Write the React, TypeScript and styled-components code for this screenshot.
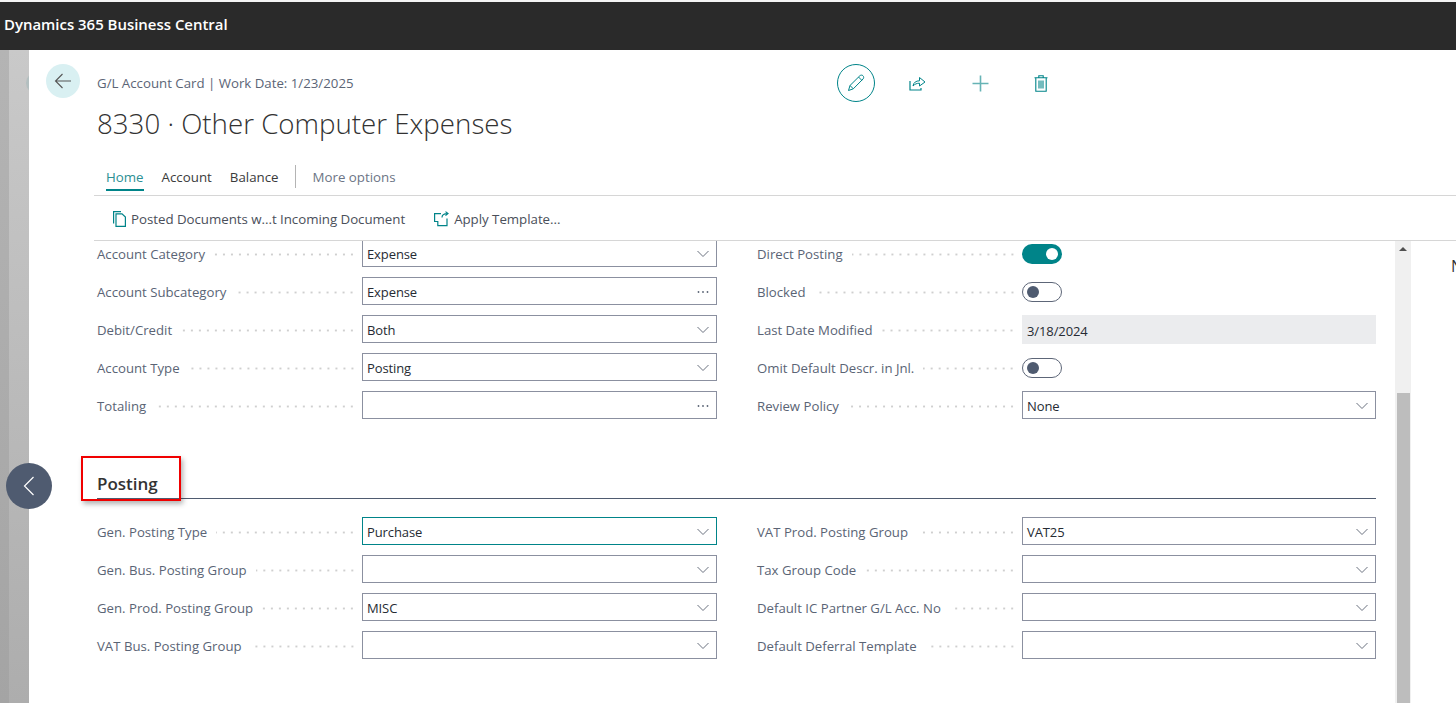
import React from "react";
import styled, { createGlobalStyle } from "styled-components";

const Global = createGlobalStyle`
  html, body { margin: 0; padding: 0; width: 100%; height: 100%; overflow: hidden; background: #fff; }
  #root { height: 100%; }
  * { box-sizing: border-box; }
  body { font-family: "Open Sans", "Noto Sans", "Liberation Sans", sans-serif; font-size: 13px; }
`;

const teal = "#008489";

const Page = styled.div`
  width: 1456px; height: 703px; display: flex; flex-direction: column; overflow: hidden; position: relative;
  border-top: 2px solid #f4f4f4;
`;
const TopBar = styled.header`
  height: 48px; flex: none; background: #2a2a2a; color: #fff; display: flex; align-items: center; padding: 0 0 4px 4px;
  font-size: 14.95px; font-weight: 600;
`;
const Body = styled.div`
  flex: 1; display: flex; min-height: 0; position: relative;
`;
const Rail = styled.div`
  width: 29px; flex: none; position: relative; overflow: hidden;
  background:
    linear-gradient(180deg, #b4b4b4 0, #a4a4a4 100%) left top / 9px 100% no-repeat,
    linear-gradient(180deg, #c9c9c9 0, #adadad 100%);
  &::after {
    content: ""; position: absolute; left: 26px; top: 22px; width: 22px; height: 22px; border-radius: 50%; background: #b3bfc0;
  }
`;
const Main = styled.main`
  flex: 1; min-width: 0; background: #fff; display: flex; flex-direction: column;
`;
const PageHead = styled.div`
  height: 111px; flex: none; display: flex; padding: 14px 0 0 17px;
`;
const BackButton = styled.div`
  width: 34px; height: 34px; border-radius: 50%; background: #d9f0f2; display: flex; align-items: center; justify-content: center; flex: none;
`;
const Titles = styled.div`
  width: 740px; margin-left: 17px; flex: none;
`;
const Crumb = styled.div`
  font-size: 13.25px; color: #5b6576; line-height: 18px; margin-top: 10px;
`;
const Title = styled.h1`
  margin: 12px 0 0; font-size: 27.7px; font-weight: 300; color: #323232; line-height: 38px; white-space: nowrap;
`;
const Actions = styled.div`
  display: flex; align-items: center; height: 38px;
`;
const EditButton = styled.div`
  width: 38px; height: 38px; border-radius: 50%; border: 1px solid ${teal}; display: flex; align-items: center; justify-content: center;
`;
const ActionIcon = styled.div<{ $gap: number }>`
  width: 24px; height: 24px; display: flex; align-items: center; justify-content: center; margin-left: ${p => p.$gap}px;
`;
const Tabs = styled.nav`
  margin-left: 65px; height: 35px; flex: none; display: flex; align-items: flex-start; border-bottom: 1px solid #d6d6d6; padding-left: 12px;
`;
const Tab = styled.div<{ $active?: boolean }>`
  height: 26px; line-height: 24px; font-size: 13.3px; color: ${p => (p.$active ? "#2c8f93" : "#3b3b3b")};
  border-bottom: 2px solid ${p => (p.$active ? teal : "transparent")}; margin-right: 18px; margin-top: 4px;
`;
const TabDivider = styled.div`
  width: 1px; height: 23px; background: #b4b4b4; margin: 4px 17px 0 -2px;
`;
const MoreTab = styled(Tab)`
  color: #6c7585;
`;
const CommandBar = styled.div`
  margin-left: 65px; height: 45px; flex: none; display: flex; align-items: center; border-bottom: 1px solid #d6d6d6; padding: 1px 0 0 19px; color: #4a4f5a; font-size: 13.3px; letter-spacing: -0.03px;
`;
const Command = styled.div`
  display: flex; align-items: center; gap: 5px; margin-right: 29px; white-space: nowrap;
`;
const Content = styled.div`
  flex: 1; min-height: 0; display: flex; overflow: hidden;
`;
const Form = styled.div`
  width: 1366px; flex: none; padding: 0 0 0 68px; margin-top: -2px;
`;
const FieldGrid = styled.div`
  display: grid; grid-template-columns: 620px 619px; column-gap: 40px; width: 1279px;
`;
const Column = styled.div`
  display: flex; flex-direction: column; gap: 10px;
`;
const Row = styled.div`
  display: flex; align-items: center; height: 28px;
`;
const Label = styled.div`
  width: 265px; flex: none; display: flex; align-items: center; color: #5a6475; font-size: 13.2px; white-space: nowrap; padding: 2px 6px 0 0;
`;
const Leader = styled.span`
  flex: 1; height: 3px; margin-left: 9px; margin-top: 1px;
  background-image: radial-gradient(circle, #cfcfcf 1px, transparent 1.2px);
  background-size: 8px 3px; background-position: right center; background-repeat: repeat-x;
`;
const InputBox = styled.div<{ $focus?: boolean }>`
  flex: 1; height: 28px; border: 1px solid ${p => (p.$focus ? teal : "#8b90a0")}; display: flex; align-items: center; justify-content: space-between;
  padding: 2px 6px 0 4px; font-size: 13px; color: #262b33; letter-spacing: -0.1px; background: #fff;
`;
const ReadOnly = styled(InputBox)`
  background: #ebecee; border-color: #ebecee; height: 29px; margin-top: 1px;
`;
const ToggleWrap = styled.div<{ $on?: boolean }>`
  width: 40px; height: 20px; border-radius: 10px; flex: none; position: relative; margin-top: 2px;
  background: ${p => (p.$on ? teal : "#fff")}; border: ${p => (p.$on ? "none" : "1px solid #5d6678")};
  &::after {
    content: ""; position: absolute; width: 12px; height: 12px; border-radius: 50%; top: 50%; transform: translateY(-50%);
    ${p => (p.$on ? "right: 4px; background: #fff;" : "left: 4px; background: #4f5b70;")}
  }
`;
const SectionHead = styled.h2`
  margin: 38px 0 18px; width: 1279px; height: 42px; font-size: 17px; font-weight: 600; color: #333;
  line-height: 24px; padding-top: 15px; border-bottom: 1px solid #4f5b70;
`;
const Scroll = styled.div`
  width: 16px; flex: none; background: #f0f0f0; display: flex; flex-direction: column; align-items: center;
`;
const ScrollArrow = styled.div`
  width: 0; height: 0; border-left: 4px solid transparent; border-right: 4px solid transparent; border-bottom: 4px solid #505050; margin-top: 6px;
`;
const ScrollThumb = styled.div`
  width: 13px; flex: 1; background: #bdbdbd; margin-top: 142px;
`;
const Aside = styled.div`
  flex: 1; overflow: hidden; padding: 15px 0 0 40px; font-size: 16px; color: #333; white-space: nowrap; line-height: 20px;
`;
const NavCircle = styled.div`
  position: absolute; left: 6px; top: 413px; width: 46px; height: 46px; border-radius: 50%; background: #4f5b70; display: flex; align-items: center; justify-content: center;
`;
const RedMark = styled.div`
  position: absolute; left: 81px; top: 406px; width: 100px; height: 45px; border: 2px solid #f00000; box-shadow: 2px 3px 5px rgba(0,0,0,.3);
`;

const Chevron = () => (
  <svg width="14" height="8" viewBox="0 0 14 8" fill="none"><path d="M1.5 1 L7 6.5 L12.5 1" stroke="#6b7280" strokeWidth="1" /></svg>
);
const Dots = () => (
  <svg width="14" height="4" viewBox="0 0 14 4"><circle cx="2.5" cy="2" r=".9" fill="#5a6475" /><circle cx="7" cy="2" r=".9" fill="#5a6475" /><circle cx="11.5" cy="2" r=".9" fill="#5a6475" /></svg>
);

type F = { label: string; value?: string; kind?: "select" | "lookup" | "ro" | "on" | "off"; focus?: boolean };

const Field = ({ label, value, kind = "select", focus }: F) => (
  <Row>
    <Label>{label}<Leader /></Label>
    {kind === "on" && <ToggleWrap $on />}
    {kind === "off" && <ToggleWrap />}
    {kind === "ro" && <ReadOnly>{value}</ReadOnly>}
    {(kind === "select" || kind === "lookup") && (
      <InputBox $focus={focus}><span>{value}</span>{kind === "select" ? <Chevron /> : <Dots />}</InputBox>
    )}
  </Row>
);

const g1L: F[] = [
  { label: "Account Category", value: "Expense" },
  { label: "Account Subcategory", value: "Expense", kind: "lookup" },
  { label: "Debit/Credit", value: "Both" },
  { label: "Account Type", value: "Posting" },
  { label: "Totaling", kind: "lookup" },
];
const g1R: F[] = [
  { label: "Direct Posting", kind: "on" },
  { label: "Blocked", kind: "off" },
  { label: "Last Date Modified", value: "3/18/2024", kind: "ro" },
  { label: "Omit Default Descr. in Jnl.", kind: "off" },
  { label: "Review Policy", value: "None" },
];
const g2L: F[] = [
  { label: "Gen. Posting Type", value: "Purchase", focus: true },
  { label: "Gen. Bus. Posting Group" },
  { label: "Gen. Prod. Posting Group", value: "MISC" },
  { label: "VAT Bus. Posting Group" },
];
const g2R: F[] = [
  { label: "VAT Prod. Posting Group", value: "VAT25" },
  { label: "Tax Group Code" },
  { label: "Default IC Partner G/L Acc. No" },
  { label: "Default Deferral Template" },
];

const Fields = ({ left, right }: { left: F[]; right: F[] }) => (
  <FieldGrid>
    <Column>{left.map(f => <Field key={f.label} {...f} />)}</Column>
    <Column>{right.map(f => <Field key={f.label} {...f} />)}</Column>
  </FieldGrid>
);

export default function App() {
  return (
    <Page>
      <Global />
      <TopBar>Dynamics 365 Business Central</TopBar>
      <Body>
        <Rail />
        <Main>
          <PageHead>
            <BackButton>
              <svg width="18" height="16" viewBox="0 0 18 16" fill="none" stroke="#555" strokeWidth="1.1"><path d="M17 8 H1.5 M8.5 1 L1.5 8 L8.5 15" /></svg>
            </BackButton>
            <Titles>
              <Crumb>G/L Account Card | Work Date: 1/23/2025</Crumb>
              <Title>8330 · Other Computer Expenses</Title>
            </Titles>
            <Actions>
              <EditButton>
                <svg width="18" height="18" viewBox="0 0 18 18" fill="none" stroke={teal} strokeWidth="1"><path d="M1.5 16.5 L3 11.5 L12.8 1.8 C13.8 .9 15.2 .9 16 1.8 C16.9 2.7 16.9 4 16 5 L6.3 14.8 Z M3 11.5 L6.3 14.8 M11.5 3 L14.8 6.3" /></svg>
              </EditButton>
              <ActionIcon $gap={30}>
                <svg width="17" height="15" viewBox="0 0 17 15" fill="none" stroke={teal} strokeWidth="1.2"><path d="M1 5 V14 H12 V12" /><path d="M4 10 C4.5 6.5 7 4.8 10.5 4.8 V1.5 L16 6 L10.5 10 V7.2 C8 7.2 5.8 8 4 10 Z" strokeWidth="1" /></svg>
              </ActionIcon>
              <ActionIcon $gap={39}>
                <svg width="17" height="17" viewBox="0 0 17 17" fill="none" stroke="#66b3b5" strokeWidth="1.6"><path d="M8.5 0.5 V16.5 M0.5 8.5 H16.5" /></svg>
              </ActionIcon>
              <ActionIcon $gap={37}>
                <svg width="14" height="17" viewBox="0 0 14 17" fill="none" stroke={teal} strokeWidth="1.1"><path d="M.5 2.8 H13.5 M4.8 2.5 V.7 H9.2 V2.5 M1.8 3 V16.2 H12.2 V3 M5 5.5 V13.5 M7 5.5 V13.5 M9 5.5 V13.5" /></svg>
              </ActionIcon>
            </Actions>
          </PageHead>
          <Tabs>
            <Tab $active>Home</Tab>
            <Tab>Account</Tab>
            <Tab>Balance</Tab>
            <TabDivider />
            <MoreTab>More options</MoreTab>
          </Tabs>
          <CommandBar>
            <Command>
              <svg width="13" height="16" viewBox="0 0 13 16" fill="none" stroke={teal} strokeWidth="1.2"><path d="M.6 12.5 V.6 H8 M3 2.8 H9 L12.4 6 V15.4 H3 Z" /></svg>
              Posted Documents w...t Incoming Document
            </Command>
            <Command>
              <svg width="15" height="16" viewBox="0 0 15 16" fill="none" stroke={teal} strokeWidth="1.2"><path d="M7 2.6 H.6 V10.5 H3.8 V14.6 H13 V7.5" /><path d="M8 6.5 C8 3.8 9.5 2.6 13.5 2.6 M11.5 .6 L14 2.6 L11.5 4.6" /></svg>
              Apply Template...
            </Command>
          </CommandBar>
          <Content>
            <Form>
              <Fields left={g1L} right={g1R} />
              <SectionHead>Posting</SectionHead>
              <Fields left={g2L} right={g2R} />
            </Form>
            <Scroll>
              <ScrollArrow />
              <ScrollThumb />
            </Scroll>
            <Aside>N</Aside>
          </Content>
        </Main>
        <NavCircle>
          <svg width="12" height="20" viewBox="0 0 12 20" fill="none" stroke="#fff" strokeWidth="1.2"><path d="M10.5 1 L1.5 10 L10.5 19" /></svg>
        </NavCircle>
        <RedMark />
      </Body>
    </Page>
  );
}
